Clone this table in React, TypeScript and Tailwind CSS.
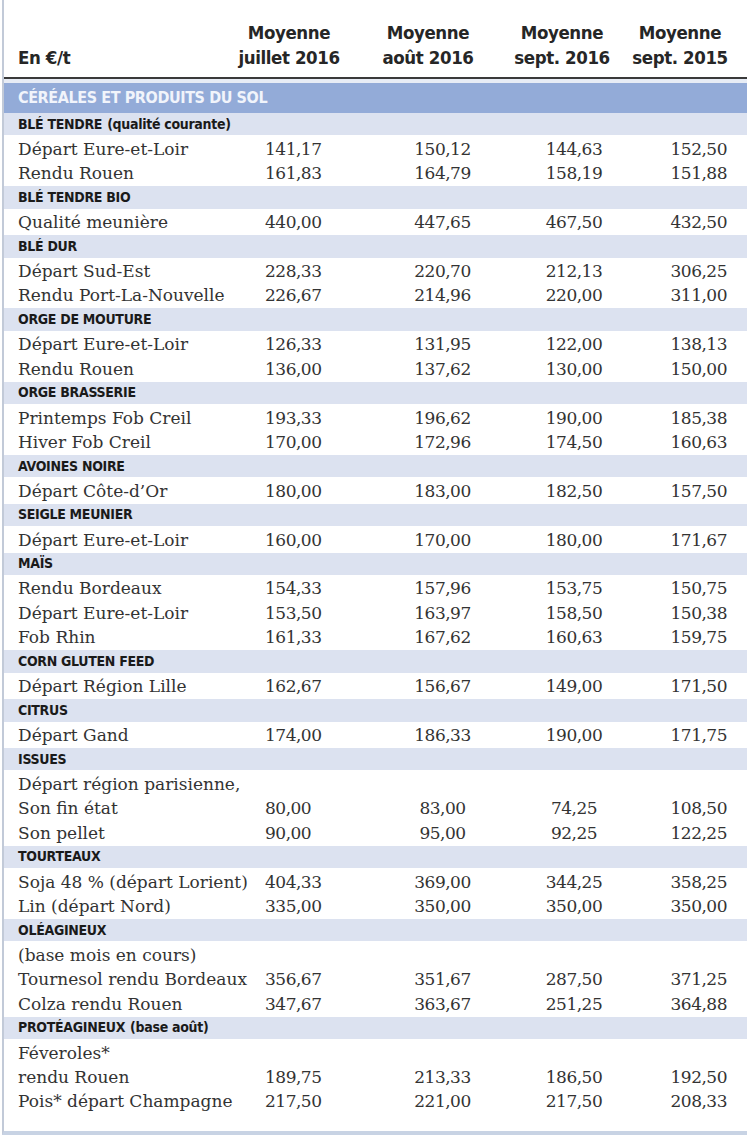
type Row =
  | { kind: 'sub'; label: string; note?: string }
  | { kind: 'row'; label: string; v?: [string, string, string, string] };

const rows: Row[] = [
  { kind: 'sub', label: 'BLÉ TENDRE', note: '(qualité courante)' },
  { kind: 'row', label: 'Départ Eure-et-Loir', v: ['141,17', '150,12', '144,63', '152,50'] },
  { kind: 'row', label: 'Rendu Rouen', v: ['161,83', '164,79', '158,19', '151,88'] },
  { kind: 'sub', label: 'BLÉ TENDRE BIO' },
  { kind: 'row', label: 'Qualité meunière', v: ['440,00', '447,65', '467,50', '432,50'] },
  { kind: 'sub', label: 'BLÉ DUR' },
  { kind: 'row', label: 'Départ Sud-Est', v: ['228,33', '220,70', '212,13', '306,25'] },
  { kind: 'row', label: 'Rendu Port-La-Nouvelle', v: ['226,67', '214,96', '220,00', '311,00'] },
  { kind: 'sub', label: 'ORGE DE MOUTURE' },
  { kind: 'row', label: 'Départ Eure-et-Loir', v: ['126,33', '131,95', '122,00', '138,13'] },
  { kind: 'row', label: 'Rendu Rouen', v: ['136,00', '137,62', '130,00', '150,00'] },
  { kind: 'sub', label: 'ORGE BRASSERIE' },
  { kind: 'row', label: 'Printemps Fob Creil', v: ['193,33', '196,62', '190,00', '185,38'] },
  { kind: 'row', label: 'Hiver Fob Creil', v: ['170,00', '172,96', '174,50', '160,63'] },
  { kind: 'sub', label: 'AVOINES NOIRE' },
  { kind: 'row', label: 'Départ Côte-d’Or', v: ['180,00', '183,00', '182,50', '157,50'] },
  { kind: 'sub', label: 'SEIGLE MEUNIER' },
  { kind: 'row', label: 'Départ Eure-et-Loir', v: ['160,00', '170,00', '180,00', '171,67'] },
  { kind: 'sub', label: 'MAÏS' },
  { kind: 'row', label: 'Rendu Bordeaux', v: ['154,33', '157,96', '153,75', '150,75'] },
  { kind: 'row', label: 'Départ Eure-et-Loir', v: ['153,50', '163,97', '158,50', '150,38'] },
  { kind: 'row', label: 'Fob Rhin', v: ['161,33', '167,62', '160,63', '159,75'] },
  { kind: 'sub', label: 'CORN GLUTEN FEED' },
  { kind: 'row', label: 'Départ Région Lille', v: ['162,67', '156,67', '149,00', '171,50'] },
  { kind: 'sub', label: 'CITRUS' },
  { kind: 'row', label: 'Départ Gand', v: ['174,00', '186,33', '190,00', '171,75'] },
  { kind: 'sub', label: 'ISSUES' },
  { kind: 'row', label: 'Départ région parisienne,' },
  { kind: 'row', label: 'Son fin état', v: ['80,00', '83,00', '74,25', '108,50'] },
  { kind: 'row', label: 'Son pellet', v: ['90,00', '95,00', '92,25', '122,25'] },
  { kind: 'sub', label: 'TOURTEAUX' },
  { kind: 'row', label: 'Soja 48 % (départ Lorient)', v: ['404,33', '369,00', '344,25', '358,25'] },
  { kind: 'row', label: 'Lin (départ Nord)', v: ['335,00', '350,00', '350,00', '350,00'] },
  { kind: 'sub', label: 'OLÉAGINEUX' },
  { kind: 'row', label: '(base mois en cours)' },
  { kind: 'row', label: 'Tournesol rendu Bordeaux', v: ['356,67', '351,67', '287,50', '371,25'] },
  { kind: 'row', label: 'Colza rendu Rouen', v: ['347,67', '363,67', '251,25', '364,88'] },
  { kind: 'sub', label: 'PROTÉAGINEUX', note: '(base août)' },
  { kind: 'row', label: 'Féveroles*' },
  { kind: 'row', label: 'rendu Rouen', v: ['189,75', '213,33', '186,50', '192,50'] },
  { kind: 'row', label: 'Pois* départ Champagne', v: ['217,50', '221,00', '217,50', '208,33'] },
];

const sans = "font-['DejaVu_Sans_Condensed','DejaVu_Sans',sans-serif] font-bold";
const serif = "font-['DejaVu_Serif',serif]";

function HeadCell({ top, bottom, className }: { top: string; bottom: string; className: string }) {
  return (
    <div className={`w-[110px] text-center ${className}`}>
      <div>{top}</div>
      <div>{bottom}</div>
    </div>
  );
}

export default function App() {
  return (
    <div className="w-[747px] h-[1135px] bg-white overflow-hidden">
      <div className="ml-[2px] h-full border-l-2 border-[#c2cad8] border-b-4 border-b-[#c8d3e4] flex flex-col">
        {/* header */}
        <div className={`h-[77px] flex items-end pb-[7px] text-[18.5px] leading-[25px] text-[#262626] tracking-[-0.4px] ${sans}`}>
          <div className="w-[230px] pl-[14px]">En €/t</div>
          <HeadCell top="Moyenne" bottom="juillet 2016" className="" />
          <HeadCell top="Moyenne" bottom="août 2016" className="ml-[29px]" />
          <HeadCell top="Moyenne" bottom="sept. 2016" className="ml-[24px]" />
          <HeadCell top="Moyenne" bottom="sept. 2015" className="ml-[8px]" />
        </div>
        <div className="h-[2px] bg-[#3a3a3a]" />
        <div className="h-[4px] bg-[#e7ecf5]" />
        <div className={`h-[30px] bg-[#93abd8] flex items-center pl-[14px] text-[16px] text-[#f1f4fb] tracking-[-0.4px] ${sans}`}>
          CÉRÉALES ET PRODUITS DU SOL
        </div>
        {rows.map((r, i) =>
          r.kind === 'sub' ? (
            <div
              key={i}
              className={`h-[24.43px] bg-[#dce2f0] border-b-2 border-white flex items-center pl-[14px] text-[14px] text-[#1a1a1a] tracking-[-0.3px] ${sans}`}
            >
              {r.label}
              {r.note && <span className="ml-[5px]">{r.note}</span>}
            </div>
          ) : (
            <div
              key={i}
              className={`h-[24.43px] flex items-center text-[17px] text-[#333333] ${serif}`}
            >
              <div className="w-[261px] pl-[14px] whitespace-nowrap">{r.label}</div>
              {r.v && (
                <>
                  <div className="w-[120px] tracking-[-0.5px]">{r.v[0]}</div>
                  <div className="w-[115px] text-center tracking-[-0.5px]">{r.v[1]}</div>
                  <div className="w-[148px] text-center tracking-[-0.5px]">{r.v[2]}</div>
                  <div className="w-[79px] text-right tracking-[-0.5px]">{r.v[3]}</div>
                </>
              )}
            </div>
          )
        )}
      </div>
    </div>
  );
}
